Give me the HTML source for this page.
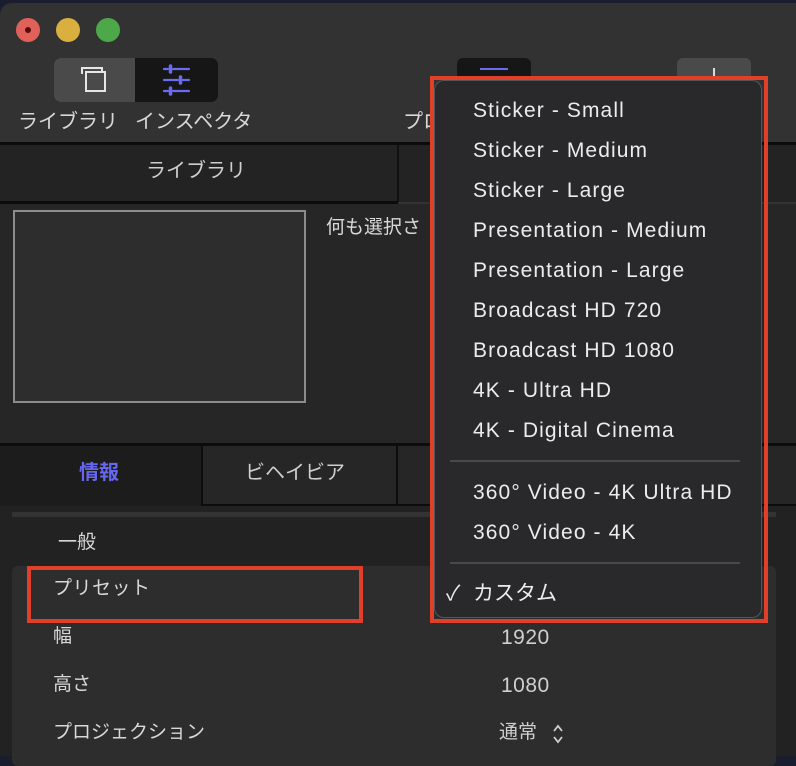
<!DOCTYPE html>
<html><head><meta charset="utf-8"><style>
*{margin:0;padding:0;box-sizing:border-box}
body{width:796px;height:756px;overflow:hidden;background:#1a1d2e;font-family:"Liberation Sans","Noto Sans CJK JP",sans-serif;position:relative}
.abs{position:absolute}
.win{position:absolute;left:0;top:3px;width:796px;height:753px;background:#323232;border-top-left-radius:12px;overflow:hidden}
.t{position:absolute;color:#d8d8d8;white-space:nowrap;line-height:1}
.menu .t{color:#ececec;font-size:21px;left:473px;letter-spacing:1.1px}
</style></head><body>
<div class="win"></div>
<div class="abs" style="left:16px;top:18px;width:24px;height:24px;border-radius:50%;background:#e0615a"></div>
<div class="abs" style="left:25px;top:27px;width:6px;height:6px;border-radius:50%;background:#5a0a08"></div>
<div class="abs" style="left:56px;top:18px;width:24px;height:24px;border-radius:50%;background:#d9b040"></div>
<div class="abs" style="left:96px;top:18px;width:24px;height:24px;border-radius:50%;background:#4da84a"></div>
<div class="abs" style="left:54px;top:58px;width:164px;height:44px;border-radius:7px;background:#161616;overflow:hidden">
 <div class="abs" style="left:0;top:0;width:81px;height:44px;background:#4a4a4a"></div>
</div>
<svg class="abs" style="left:80px;top:66px" width="30" height="30" viewBox="0 0 30 30" fill="none" stroke="#e6e6e6" stroke-width="2"><path d="M2 8V2h20v3"/><rect x="6" y="6" width="19" height="19"/></svg>
<svg class="abs" style="left:162px;top:64px" width="30" height="32" viewBox="0 0 30 32" stroke="#6b6bf0" stroke-width="2.2" stroke-linecap="round"><path d="M2 5h4M11 5h16M2 16h14M21 16h6M2 27h4M11 27h16"/><path d="M8.5 2v6M18.5 13v6M8.5 24v6" stroke-width="3.5"/></svg>
<div class="t" style="left:18px;top:112px;font-size:20px">ライブラリ</div>
<div class="t" style="left:135px;top:112px;font-size:20px">インスペクタ</div>
<div class="t" style="left:403px;top:112px;font-size:20px">プロ</div>
<div class="abs" style="left:457px;top:58px;width:74px;height:30px;border-radius:6px;background:#161616"></div>
<div class="abs" style="left:480px;top:68px;width:28px;height:2px;background:#6b6bf0"></div>
<div class="abs" style="left:677px;top:58px;width:74px;height:30px;border-radius:6px;background:#4a4a4a"></div>
<div class="abs" style="left:713px;top:68px;width:2px;height:10px;background:#ddd"></div>
<div class="abs" style="left:0;top:142px;width:796px;height:3px;background:#0c0c0c"></div>
<div class="abs" style="left:0;top:145px;width:796px;height:57px;background:#232323"></div>
<div class="abs" style="left:397px;top:145px;width:2px;height:57px;background:#111"></div>
<div class="abs" style="left:0;top:201px;width:398px;height:3px;background:#0c0c0c"></div>
<div class="t" style="left:146px;top:161px;font-size:20px;color:#cfcfcf">ライブラリ</div>
<div class="abs" style="left:0;top:204px;width:796px;height:239px;background:#262626"></div>
<div class="abs" style="left:13px;top:210px;width:293px;height:193px;border:2px solid #8c8c8c;background:#2d2d2d"></div>
<div class="t" style="left:326px;top:218px;font-size:19px">何も選択さ</div>
<div class="abs" style="left:0;top:443px;width:796px;height:3px;background:#0c0c0c"></div>
<div class="abs" style="left:0;top:446px;width:796px;height:60px;background:#262626"></div>
<div class="abs" style="left:0;top:446px;width:201px;height:60px;background:#1c1c1c"></div>
<div class="abs" style="left:201px;top:446px;width:2px;height:60px;background:#0c0c0c"></div>
<div class="abs" style="left:396px;top:446px;width:2px;height:60px;background:#0c0c0c"></div>
<div class="abs" style="left:201px;top:504px;width:595px;height:2px;background:#0c0c0c"></div>
<div class="t" style="left:79px;top:463px;font-size:20px;color:#6666ee;font-weight:bold">情報</div>
<div class="t" style="left:245px;top:463px;font-size:20px;color:#cfcfcf">ビヘイビア</div>
<div class="abs" style="left:0;top:506px;width:796px;height:250px;background:#222"></div>
<div class="abs" style="left:12px;top:512px;width:764px;height:5px;background:#333"></div>
<div class="t" style="left:58px;top:533px;font-size:19px">一般</div>
<div class="abs" style="left:12px;top:566px;width:764px;height:200px;background:#2d2d2d;border-radius:6px"></div>
<div class="t" style="left:53px;top:579px;font-size:19px;letter-spacing:0.5px">プリセット</div>
<div class="t" style="left:53px;top:627px;font-size:19px">幅</div>
<div class="t" style="left:53px;top:675px;font-size:19px">高さ</div>
<div class="t" style="left:53px;top:723px;font-size:19px">プロジェクション</div>
<div class="t" style="left:501px;top:627px;font-size:21px;color:#cfcfcf;letter-spacing:0.5px">1920</div>
<div class="t" style="left:501px;top:675px;font-size:21px;color:#cfcfcf;letter-spacing:0.5px">1080</div>
<div class="t" style="left:499px;top:723px;font-size:19px;color:#cfcfcf">通常</div>
<svg class="abs" style="left:552px;top:723px" width="12" height="22" viewBox="0 0 12 22" fill="none" stroke="#cfcfcf" stroke-width="1.8"><path d="M2 8l4-5 4 5M2 14l4 5 4-5"/></svg>
<div class="abs" style="left:27px;top:566px;width:336px;height:57px;border:4px solid #e0402a"></div>
<div class="menu">
<div class="abs" style="left:434px;top:80px;width:328px;height:538px;background:#29292b;border-radius:10px;border:1px solid #555"></div>
<div class="t" style="top:100px">Sticker - Small</div>
<div class="t" style="top:140px">Sticker - Medium</div>
<div class="t" style="top:180px">Sticker - Large</div>
<div class="t" style="top:220px">Presentation - Medium</div>
<div class="t" style="top:260px">Presentation - Large</div>
<div class="t" style="top:300px">Broadcast HD 720</div>
<div class="t" style="top:340px">Broadcast HD 1080</div>
<div class="t" style="top:380px">4K - Ultra HD</div>
<div class="t" style="top:420px">4K - Digital Cinema</div>
<div class="abs" style="left:450px;top:460px;width:290px;height:2px;background:#4a4a4c"></div>
<div class="t" style="top:482px">360° Video - 4K Ultra HD</div>
<div class="t" style="top:522px">360° Video - 4K</div>
<div class="abs" style="left:450px;top:562px;width:290px;height:2px;background:#4a4a4c"></div>
<div class="t" style="top:583px;left:446px">✓</div>
<div class="t" style="top:583px;letter-spacing:0">カスタム</div>
</div>
<div class="abs" style="left:430px;top:76px;width:338px;height:547px;border:4px solid #e0402a"></div>
</body></html>
